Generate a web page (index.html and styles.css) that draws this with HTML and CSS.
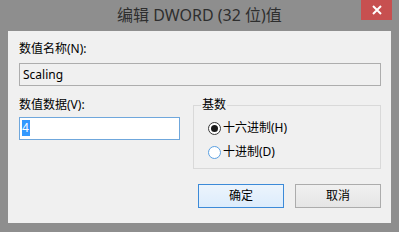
FILE: index.html
```html
<!DOCTYPE html>
<html lang="zh-CN">
<head>
<meta charset="utf-8">
<title>编辑 DWORD (32 位)值</title>
<link rel="stylesheet" href="styles.css">
</head>
<body>
<div class="window">
  <div class="titlebar">
    <div class="title">编辑 DWORD (32 位)值</div>
    <div class="close" aria-label="关闭">
      <svg width="10" height="10" viewBox="0 0 10 10"><path d="M1 1 L9 9 M9 1 L1 9" stroke="#fff" stroke-width="2" fill="none"/></svg>
    </div>
  </div>
  <div class="client">
    <div class="label">数值名称(N):</div>
    <div class="field readonly">Scaling</div>
    <div class="row2">
      <div class="col">
        <div class="label">数值数据(V):</div>
        <div class="field focused"><span class="sel">4</span></div>
      </div>
      <fieldset class="group">
        <legend>基数</legend>
        <div class="radio"><span class="dot checked"></span><span>十六进制(H)</span></div>
        <div class="radio second"><span class="dot hover"></span><span>十进制(D)</span></div>
      </fieldset>
    </div>
    <div class="buttons">
      <div class="btn default">确定</div>
      <div class="btn">取消</div>
    </div>
  </div>
</div>
</body>
</html>
```
FILE: styles.css
```css
html, body {
  margin: 0;
  padding: 0;
}
body {
  width: 399px;
  height: 232px;
  overflow: hidden;
  font-family: "Noto Sans", "Noto Sans CJK SC", sans-serif;
  font-size: 12px;
  color: #000;
}
.window {
  width: 399px;
  height: 232px;
  background: #8e8e8e;
  display: flex;
  flex-direction: column;
}
.titlebar {
  height: 31px;
  display: grid;
}
.title {
  grid-area: 1 / 1;
  justify-self: center;
  align-self: center;
  font-size: 16px;
  line-height: 20px;
  color: #2e2e2e;
  margin-top: -1px;
}
.close {
  grid-area: 1 / 1;
  justify-self: end;
  align-self: start;
  width: 31px;
  height: 20px;
  margin-right: 7px;
  background: #c75050;
  display: flex;
  align-items: center;
  justify-content: center;
}
.client {
  margin: 0 8px;
  height: 192px;
  box-sizing: border-box;
  background: #f0f0f0;
  padding: 10px 10px 0 11px;
  display: flex;
  flex-direction: column;
}
.label {
  line-height: 16px;
  height: 16px;
}
.field {
  box-sizing: border-box;
  height: 23px;
  border: 1px solid #adadad;
  line-height: 19px;
  padding: 1px 3px;
  margin-top: 6px;
  white-space: nowrap;
}
.readonly {
  background: #f0f0f0;
}
.focused {
  margin-top: 4px;
  background: #fff;
  border-color: #6fa7dc;
  padding: 0 2px;
  display: flex;
  align-items: center;
}
.sel {
  background: #3399ff;
  color: #fff;
  line-height: 16px;
  height: 16px;
  padding: 0 1px 0 0;
  margin-top: -2px;
}
.row2 {
  margin-top: 11px;
  display: grid;
  grid-template-columns: 161px 1fr;
  column-gap: 13px;
  align-items: start;
}
.col {
  display: flex;
  flex-direction: column;
}
.group {
  margin: 0;
  min-width: 0;
  border: 1px solid #d9d9d9;
  padding: 7px 0 8px 0;
}
.group legend {
  margin-left: 7px;
  padding: 0 1px;
  line-height: 16px;
  height: 16px;
}
.radio {
  display: flex;
  align-items: center;
  gap: 2px;
  padding-left: 14px;
  line-height: 16px;
  height: 16px;
}
.radio.second {
  margin-top: 8px;
}
.dot {
  box-sizing: border-box;
  width: 13px;
  height: 13px;
  border-radius: 50%;
  border: 1px solid #3a3a3a;
  background: #fff;
  display: flex;
  align-items: center;
  justify-content: center;
}
.dot.checked::after {
  content: "";
  width: 7px;
  height: 7px;
  border-radius: 50%;
  background: #1a1a1a;
}
.dot.hover {
  border-color: #5aa0e2;
}
.buttons {
  margin-top: 15px;
  display: flex;
  justify-content: flex-end;
  gap: 11px;
}
.btn {
  box-sizing: border-box;
  width: 86px;
  height: 24px;
  border: 1px solid #acacac;
  background: linear-gradient(#f0f0f0, #e5e5e5);
  display: flex;
  align-items: center;
  justify-content: center;
  line-height: 16px;
}
.btn.default {
  border-color: #3c8ad8;
  background: linear-gradient(#ecf4fc, #dcecfc);
}
```
